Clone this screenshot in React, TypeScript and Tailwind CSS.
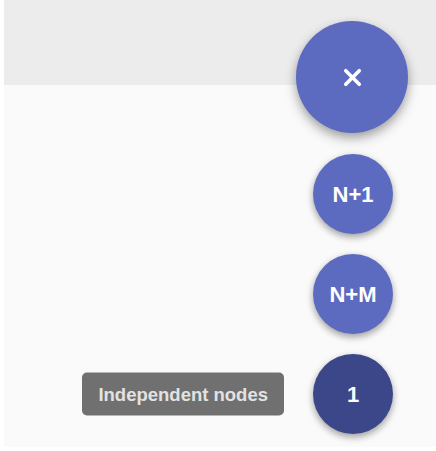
import { X } from 'lucide-react';

const font = { fontFamily: '"Liberation Sans", Arial, sans-serif' };

function MiniFab({ label, dark, tooltip }: { label: string; dark?: boolean; tooltip?: string }) {
  return (
    <div className="relative">
      {tooltip && (
        <div className="absolute right-full top-1/2 mr-[29px] flex h-[43px] -translate-y-1/2 items-center whitespace-nowrap rounded-[5px] bg-[#707070] px-[16px] text-[18.5px] font-bold text-[#e2e2e2]">
          {tooltip}
        </div>
      )}
      <button
        className={
          dark
            ? 'flex h-[80px] w-[80px] items-center justify-center rounded-full bg-[#3c4789] text-[22px] font-bold text-white shadow-[0_3px_6px_rgba(0,0,0,0.2),0_3px_8px_rgba(0,0,0,0.2)]'
            : 'flex h-[80px] w-[80px] items-center justify-center rounded-full bg-[#5c6bc0] text-[22px] font-bold text-white shadow-[0_3px_6px_rgba(0,0,0,0.2),0_3px_8px_rgba(0,0,0,0.2)]'
        }
      >
        {label}
      </button>
    </div>
  );
}

export default function App() {
  return (
    <div className="relative h-[451px] w-[436px] overflow-hidden bg-white pb-[4px] pl-[4px]" style={font}>
      <div className="flex h-full flex-col">
        <div className="h-[85px] bg-[#ececec]" />
        <div className="flex-1 bg-[#fafafa]" />
      </div>

      {/* Speed dial */}
      <div className="absolute right-[28px] top-[21px] flex w-[112px] flex-col items-center">
        <button className="flex h-[112px] w-[112px] items-center justify-center rounded-full bg-[#5c6bc0] text-white shadow-[0_4px_8px_rgba(0,0,0,0.22),0_6px_14px_rgba(0,0,0,0.18)]">
          <X size={27} strokeWidth={3.2} />
        </button>
        <div className="ml-[2px] mt-[21px] flex flex-col items-center gap-[20px]">
          <MiniFab label="N+1" />
          <MiniFab label="N+M" />
          <MiniFab label="1" dark tooltip="Independent nodes" />
        </div>
      </div>
    </div>
  );
}
